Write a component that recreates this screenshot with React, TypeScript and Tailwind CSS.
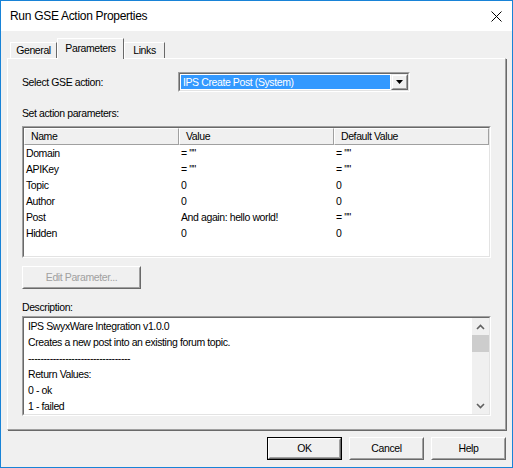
import React from 'react';

const rows = [
  ['Domain', '= ""', '= ""'],
  ['APIKey', '= ""', '= ""'],
  ['Topic', '0', '0'],
  ['Author', '0', '0'],
  ['Post', 'And again: hello world!', '= ""'],
  ['Hidden', '0', '0'],
];

const descLines = [
  'IPS SwyxWare Integration v1.0.0',
  'Creates a new post into an existing forum topic.',
  '---------------------------------',
  'Return Values:',
  '0 - ok',
  '1 - failed',
];

// sunken 3D frame (classic windows)
function Sunken({ className, children }: { className?: string; children: React.ReactNode }) {
  return (
    <div className={`border border-t-[#a0a0a0] border-l-[#a0a0a0] border-r-white border-b-white ${className ?? ''}`}>
      <div className="w-full h-full border border-t-[#696969] border-l-[#696969] border-r-[#e3e3e3] border-b-[#e3e3e3] bg-white relative overflow-hidden">
        {children}
      </div>
    </div>
  );
}

function Button({ label, w, isDefault, disabled }: { label: string; w: string; isDefault?: boolean; disabled?: boolean }) {
  const inner = (
    <div className="w-full h-full border border-t-white border-l-white border-r-[#696969] border-b-[#696969]">
      <div className={`w-full h-full border border-t-[#f0f0f0] border-l-[#f0f0f0] border-r-[#a0a0a0] border-b-[#a0a0a0] flex items-center justify-center ${disabled ? 'text-[#a0a0a0]' : 'text-black'}`}>
        {label}
      </div>
    </div>
  );
  return (
    <div className={`${w} h-[23px] bg-[#f0f0f0] ${isDefault ? 'border border-black' : ''}`}>{inner}</div>
  );
}

function Tab({ label, selected, w }: { label: string; selected?: boolean; w: string }) {
  return (
    <div
      className={`${w} flex items-center justify-center border-t border-l border-t-white border-l-white border-r border-r-[#696969] bg-[#f0f0f0] ${
        selected ? 'h-[21px] relative z-10 -mb-px pb-[2px]' : 'h-[16px]'
      }`}
    >
      {label}
    </div>
  );
}

function Chevron({ up }: { up?: boolean }) {
  return (
    <svg width="9" height="6" viewBox="0 0 9 6">
      <path d={up ? 'M1 5 L4.5 1.5 L8 5' : 'M1 1 L4.5 4.5 L8 1'} fill="none" stroke="#606060" strokeWidth="1.6" />
    </svg>
  );
}

export default function App() {
  return (
    <div className="w-[513px] h-[468px] border border-[#1883d7] bg-[#f0f0f0] flex flex-col text-[10.5px] tracking-[-0.4px] leading-[13px] text-black font-['Liberation_Sans',Arial,sans-serif] overflow-hidden">
      {/* title bar */}
      <div className="h-[30px] bg-white flex items-center justify-between pl-[9px] pr-[10px] shrink-0">
        <span className="text-[12px] tracking-[-0.3px] text-black">Run GSE Action Properties</span>
        <svg width="11" height="11" viewBox="0 0 11 11">
          <path d="M0.5 0.5 L10.5 10.5 M10.5 0.5 L0.5 10.5" stroke="#000" strokeWidth="1" />
        </svg>
      </div>

      <div className="flex-1 flex flex-col px-[6px]">
        {/* tabs */}
        <div className="h-[27px] flex items-end pl-[3px] shrink-0">
          <Tab label="General" w="w-[47px]" />
          <Tab label="Parameters" w="w-[67px]" selected />
          <Tab label="Links" w="w-[41px]" />
        </div>

        {/* tab page */}
        <div className="h-[372px] border border-t-white border-l-white border-r-[#a0a0a0] border-b-[#a0a0a0] shadow-[1px_1px_0_#696969] pl-[14px] shrink-0">
          <div className="w-[469px] flex flex-col">
            <div className="mt-[13px] flex items-center h-[20px]">
              <span className="w-[156px]">Select GSE action:</span>
              <Sunken className="w-[232px] h-[20px]">
                <div className="flex h-full">
                  <div className="flex-1 m-px bg-[#3399ff] text-white flex items-center pl-[2px]">IPS Create Post (System)</div>
                  <div className="w-[17px] h-full bg-[#f0f0f0] border border-t-[#f0f0f0] border-l-[#f0f0f0] border-r-[#696969] border-b-[#696969]">
                    <div className="w-full h-full border border-t-white border-l-white border-r-[#a0a0a0] border-b-[#a0a0a0] flex items-center justify-center">
                      <svg width="7" height="4" viewBox="0 0 7 4">
                        <path d="M0 0 H7 L3.5 4 Z" fill="#000" />
                      </svg>
                    </div>
                  </div>
                </div>
              </Sunken>
            </div>

            <div className="mt-[15px]">Set action parameters:</div>

            <Sunken className="mt-[6px] h-[132px]">
              <div className="grid grid-cols-[155px_155px_155px] h-[17px] bg-[#f0f0f0]">
                {['Name', 'Value', 'Default Value'].map((h) => (
                  <div key={h} className="border-t border-l border-t-white border-l-white border-r border-b border-r-[#a0a0a0] border-b-[#a0a0a0] flex items-center pl-[6px]">
                    {h}
                  </div>
                ))}
              </div>
              {rows.map((r) => (
                <div key={r[0]} className="grid grid-cols-[155px_155px_155px] h-[16px] items-center">
                  {r.map((c, i) => (
                    <div key={i} className="pl-[2px] whitespace-pre">{c}</div>
                  ))}
                </div>
              ))}
            </Sunken>

            <div className="mt-[8px]">
              <Button label="Edit Parameter..." w="w-[119px]" disabled />
            </div>

            <div className="mt-[12px]">Description:</div>

            <Sunken className="mt-[2px] h-[100px]">
              <div className="flex h-full">
                <div className="flex-1 pl-[4px] leading-[16px]">
                  {descLines.map((l, i) => (
                    <div key={i} className="whitespace-pre">{l}</div>
                  ))}
                </div>
                <div className="w-[17px] h-full bg-[#f0f0f0] flex flex-col">
                  <div className="h-[17px] flex items-center justify-center"><Chevron up /></div>
                  <div className="h-[17px] bg-[#cdcdcd]" />
                  <div className="flex-1" />
                  <div className="h-[17px] flex items-center justify-center"><Chevron /></div>
                </div>
              </div>
            </Sunken>
          </div>
        </div>

        {/* dialog buttons */}
        <div className="flex justify-end gap-[7px] pt-[7px]">
          <Button label="OK" w="w-[75px]" isDefault />
          <Button label="Cancel" w="w-[75px]" />
          <Button label="Help" w="w-[75px]" />
        </div>
      </div>
    </div>
  );
}
